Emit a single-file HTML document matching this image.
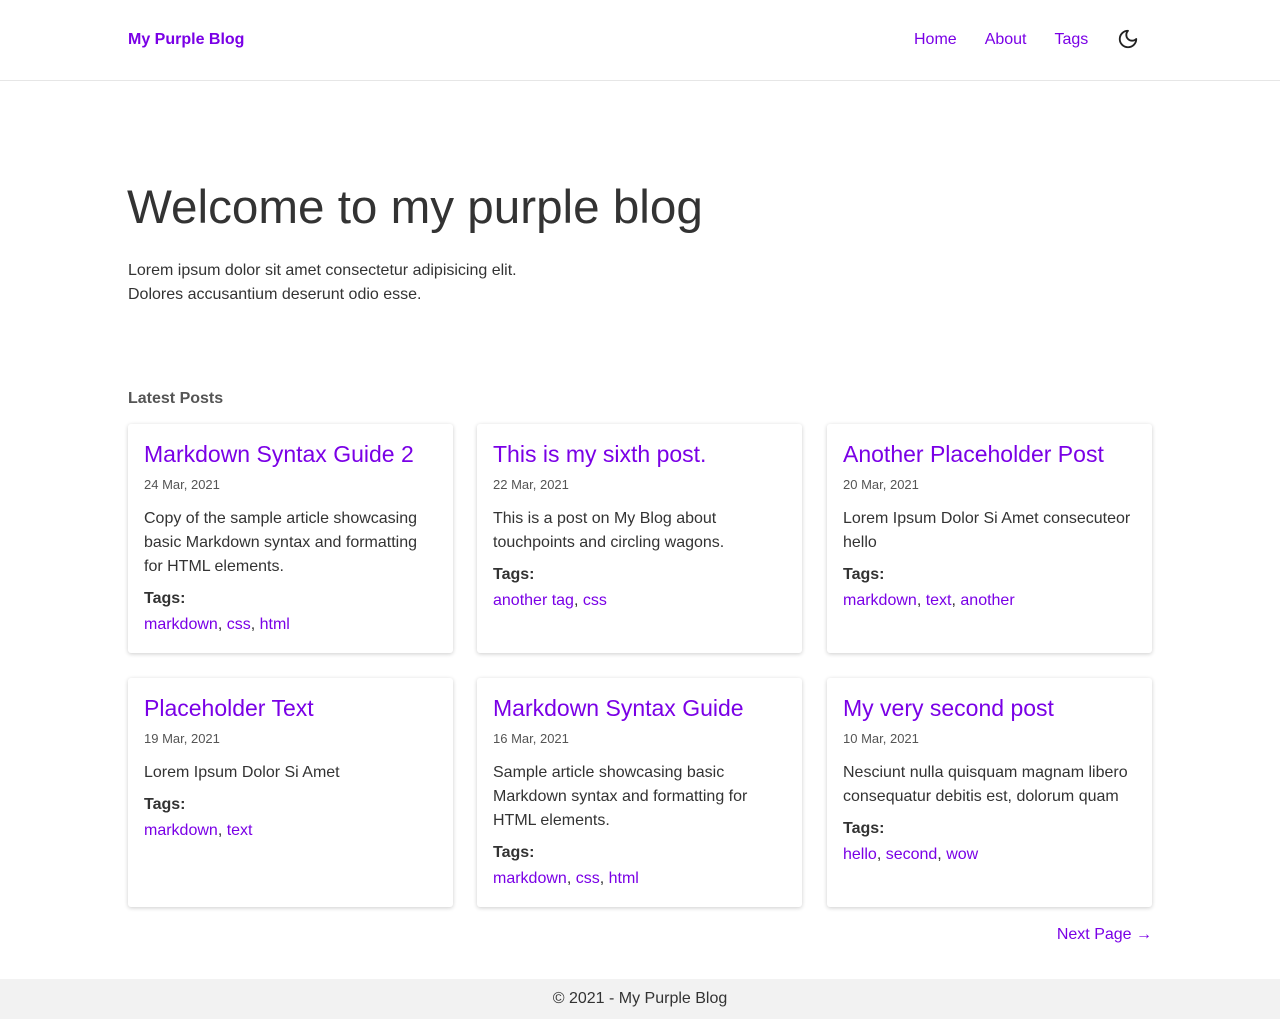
<!DOCTYPE html>
<html><head><meta charset="utf-8"><style>
*{box-sizing:border-box;margin:0;padding:0}
body{width:1280px;height:1019px;font-family:"Liberation Sans",sans-serif;color:#333;background:#fff;position:relative}
a{color:#7a00e6;text-decoration:none}
header{height:81px;border-bottom:1px solid #e6e6e6;position:relative}
.logo{position:absolute;left:128px;top:31px;font-weight:bold;font-size:16px;color:#7a00e6}
nav{position:absolute;top:31px;left:914px;font-size:16px}
nav a{margin-right:28px}
.moon{position:absolute;left:1117px;top:28px}
h1{position:absolute;left:127px;top:180px;font-weight:normal;font-size:47.6px;color:#333}
.intro{position:absolute;left:128px;top:259px;font-size:16px;line-height:24px}
h2{position:absolute;left:128px;top:390px;font-size:16px;color:#555}
.card{position:absolute;width:325px;height:229px;background:#fff;border-radius:3px;box-shadow:0 1px 4px rgba(0,0,0,.2);padding:14px 16px}
.card h3{font-weight:normal;font-size:23px;color:#7a00e6;line-height:32px}
.date{font-size:13px;color:#555;margin-top:7px;line-height:16px}
.card p{font-size:16px;line-height:24px;margin-top:14px}
.card b{display:block;font-size:16px;line-height:24px;margin-top:8px;margin-bottom:2px}
.tags{font-size:16px;line-height:24px}
.next{position:absolute;right:128px;top:926px;font-size:16px;color:#7a00e6}
footer{position:absolute;left:0;top:979px;width:1280px;height:40px;background:#f2f2f2;text-align:center;line-height:39px;font-size:16px}
</style></head><body>
<header><a class="logo">My Purple Blog</a>
<nav><a>Home</a><a>About</a><a>Tags</a></nav>
<svg class="moon" width="22" height="22" viewBox="0 0 24 24" fill="none" stroke="#222" stroke-width="2" stroke-linecap="round" stroke-linejoin="round"><path d="M12 3a6 6 0 0 0 9 9 9 9 0 1 1-9-9z"/></svg>
</header>
<h1>Welcome to my purple blog</h1>
<div class="intro">Lorem ipsum dolor sit amet consectetur adipisicing elit.<br>Dolores accusantium deserunt odio esse.</div>
<h2>Latest Posts</h2>
<div class="card" style="left:128px;top:424px"><h3>Markdown Syntax Guide 2</h3><div class="date">24 Mar, 2021</div><p>Copy of the sample article showcasing basic Markdown syntax and formatting for HTML elements.</p><b>Tags:</b><div class="tags"><a>markdown</a>, <a>css</a>, <a>html</a></div></div>
<div class="card" style="left:477px;top:424px"><h3>This is my sixth post.</h3><div class="date">22 Mar, 2021</div><p>This is a post on My Blog about touchpoints and circling wagons.</p><b>Tags:</b><div class="tags"><a>another tag</a>, <a>css</a></div></div>
<div class="card" style="left:827px;top:424px"><h3>Another Placeholder Post</h3><div class="date">20 Mar, 2021</div><p>Lorem Ipsum Dolor Si Amet consecuteor hello</p><b>Tags:</b><div class="tags"><a>markdown</a>, <a>text</a>, <a>another</a></div></div>
<div class="card" style="left:128px;top:678px"><h3>Placeholder Text</h3><div class="date">19 Mar, 2021</div><p>Lorem Ipsum Dolor Si Amet</p><b>Tags:</b><div class="tags"><a>markdown</a>, <a>text</a></div></div>
<div class="card" style="left:477px;top:678px"><h3>Markdown Syntax Guide</h3><div class="date">16 Mar, 2021</div><p>Sample article showcasing basic Markdown syntax and formatting for HTML elements.</p><b>Tags:</b><div class="tags"><a>markdown</a>, <a>css</a>, <a>html</a></div></div>
<div class="card" style="left:827px;top:678px"><h3>My very second post</h3><div class="date">10 Mar, 2021</div><p>Nesciunt nulla quisquam magnam libero consequatur debitis est, dolorum quam</p><b>Tags:</b><div class="tags"><a>hello</a>, <a>second</a>, <a>wow</a></div></div>
<a class="next">Next Page →</a>
<footer>© 2021 - My Purple Blog</footer>
</body></html>
